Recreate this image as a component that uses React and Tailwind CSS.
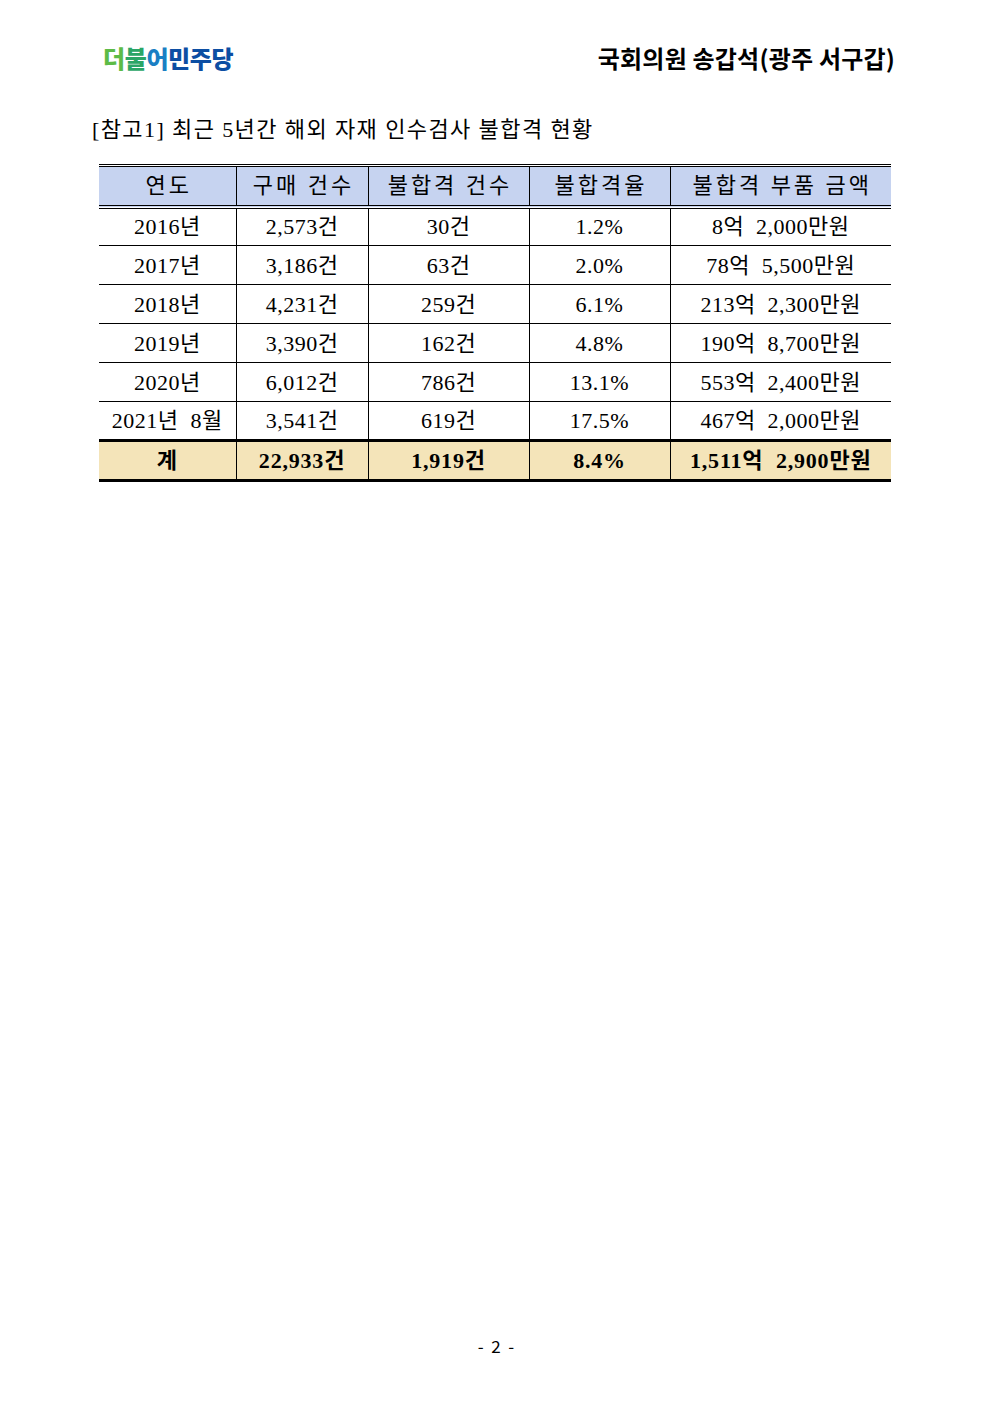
const rows = [
  ['2016년', '2,573건', '30건', '1.2%', '8억  2,000만원'],
  ['2017년', '3,186건', '63건', '2.0%', '78억  5,500만원'],
  ['2018년', '4,231건', '259건', '6.1%', '213억  2,300만원'],
  ['2019년', '3,390건', '162건', '4.8%', '190억  8,700만원'],
  ['2020년', '6,012건', '786건', '13.1%', '553억  2,400만원'],
  ['2021년  8월', '3,541건', '619건', '17.5%', '467억  2,000만원'],
]

const heads = ['연도', '구매 건수', '불합격 건수', '불합격율', '불합격 부품 금액']
const total = ['계', '22,933건', '1,919건', '8.4%', '1,511억  2,900만원']

const serif = "font-['Liberation_Serif','Noto_Sans_CJK_KR',serif]"
const sans = "font-['Noto_Sans_CJK_KR','Liberation_Sans',sans-serif]"

function Cell({ children, last, className = '' }) {
  return (
    <td className={`text-center whitespace-pre p-0 ${last ? '' : 'border-r border-black'} ${className}`}>
      {children}
    </td>
  )
}

export default function App() {
  return (
    <div className="w-[992px] h-[1403px] bg-white relative flex flex-col">
      <header className="flex items-center justify-between pl-[103px] pr-[97px] pt-[46px]">
        <div className={`${sans} font-black text-[24px] tracking-[-0.4px] leading-none`}>
          <span className="text-[#5dbb46]">더</span>
          <span className="text-[#2aa566]">불</span>
          <span className="text-[#1a7fc4]">어</span>
          <span className="text-[#0c4ea3]">민주당</span>
        </div>
        <div className={`${sans} font-bold text-[24px] text-black leading-none tracking-[0.2px]`}>
          국회의원 송갑석(광주 서구갑)
        </div>
      </header>

      <p className={`${serif} text-[22px] text-black pl-[92px] mt-[49px] leading-none whitespace-pre tracking-[1.4px]`}>
        [참고1] 최근 5년간 해외 자재 인수검사 불합격 현황
      </p>

      <div className="pl-[99px] mt-[23px]">
        <table className={`${serif} w-[792px] border-collapse table-fixed text-[22px] text-black`}>
          <colgroup>
            <col className="w-[137px]" />
            <col className="w-[132px]" />
            <col className="w-[161px]" />
            <col className="w-[141px]" />
            <col className="w-[221px]" />
          </colgroup>
          <thead>
            <tr className="h-[41px] bg-[#c6d3f0] border-t-[3px] border-b-[4px] border-double border-black">
              {heads.map((h, i) => (
                <Cell key={h} last={i === 4} className="tracking-[3px] pl-[3px]">
                  {h}
                </Cell>
              ))}
            </tr>
          </thead>
          <tbody>
            {rows.map((r, ri) => (
              <tr key={ri} className={`h-[39px] ${ri < rows.length - 1 ? 'border-b border-black' : ''}`}>
                {r.map((c, i) => (
                  <Cell key={i} last={i === 4} className="tracking-[0.5px]">
                    {c}
                  </Cell>
                ))}
              </tr>
            ))}
            <tr className="h-[40px] bg-[#f4e4b9] border-y-[3px] border-black">
              {total.map((c, i) => (
                <Cell key={i} last={i === 4} className="font-bold tracking-[0.8px]">
                  {c}
                </Cell>
              ))}
            </tr>
          </tbody>
        </table>
      </div>

      <div className={`absolute left-0 right-0 top-[1333px] text-center ${sans} text-[17px] text-black whitespace-pre`}>
        -  2  -
      </div>
    </div>
  )
}
